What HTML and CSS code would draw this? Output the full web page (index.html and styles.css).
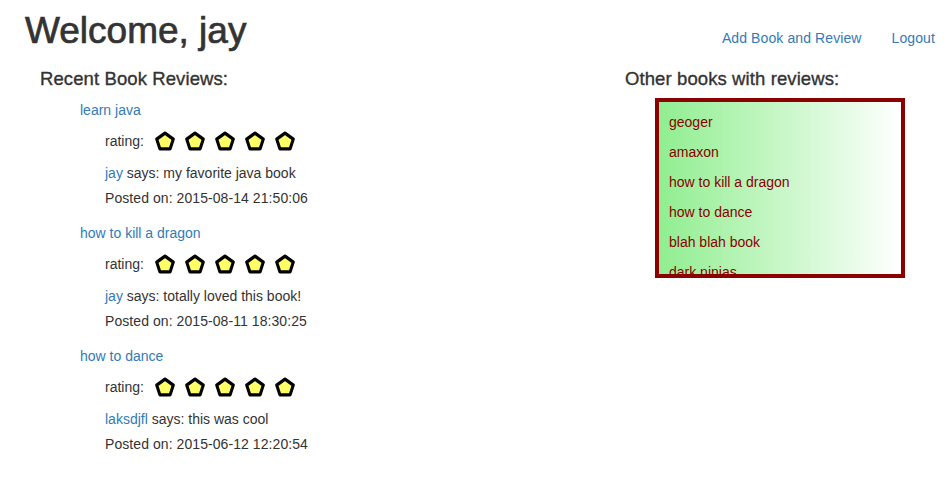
FILE: index.html
```html
<!DOCTYPE html>
<html>
<head>
<meta charset="utf-8">
<link rel="stylesheet" href="styles.css">
</head>
<body>
<div class="page">
  <header class="top">
    <h1 class="welcome">Welcome, jay</h1>
    <nav class="nav">
      <a href="#">Add Book and Review</a>
      <a href="#">Logout</a>
    </nav>
  </header>
  <div class="columns">
    <section class="recent">
      <h4 class="section-title">Recent Book Reviews:</h4>
      <div class="book">
        <a class="book-title" href="#">learn java</a>
        <div class="rating">
          <span class="rating-label">rating:</span>
          <span class="stars">
            <svg class="star" viewBox="0 0 24 24"><polygon points="12,3.4 21.04,9.96 17.58,20.59 6.42,20.59 2.96,9.96"/></svg>
            <svg class="star" viewBox="0 0 24 24"><polygon points="12,3.4 21.04,9.96 17.58,20.59 6.42,20.59 2.96,9.96"/></svg>
            <svg class="star" viewBox="0 0 24 24"><polygon points="12,3.4 21.04,9.96 17.58,20.59 6.42,20.59 2.96,9.96"/></svg>
            <svg class="star" viewBox="0 0 24 24"><polygon points="12,3.4 21.04,9.96 17.58,20.59 6.42,20.59 2.96,9.96"/></svg>
            <svg class="star" viewBox="0 0 24 24"><polygon points="12,3.4 21.04,9.96 17.58,20.59 6.42,20.59 2.96,9.96"/></svg>
          </span>
        </div>
        <p class="says"><a href="#">jay</a> says: my favorite java book</p>
        <p class="posted">Posted on: 2015-08-14 21:50:06</p>
      </div>
      <div class="book">
        <a class="book-title" href="#">how to kill a dragon</a>
        <div class="rating">
          <span class="rating-label">rating:</span>
          <span class="stars">
            <svg class="star" viewBox="0 0 24 24"><polygon points="12,3.4 21.04,9.96 17.58,20.59 6.42,20.59 2.96,9.96"/></svg>
            <svg class="star" viewBox="0 0 24 24"><polygon points="12,3.4 21.04,9.96 17.58,20.59 6.42,20.59 2.96,9.96"/></svg>
            <svg class="star" viewBox="0 0 24 24"><polygon points="12,3.4 21.04,9.96 17.58,20.59 6.42,20.59 2.96,9.96"/></svg>
            <svg class="star" viewBox="0 0 24 24"><polygon points="12,3.4 21.04,9.96 17.58,20.59 6.42,20.59 2.96,9.96"/></svg>
            <svg class="star" viewBox="0 0 24 24"><polygon points="12,3.4 21.04,9.96 17.58,20.59 6.42,20.59 2.96,9.96"/></svg>
          </span>
        </div>
        <p class="says"><a href="#">jay</a> says: totally loved this book!</p>
        <p class="posted">Posted on: 2015-08-11 18:30:25</p>
      </div>
      <div class="book">
        <a class="book-title" href="#">how to dance</a>
        <div class="rating">
          <span class="rating-label">rating:</span>
          <span class="stars">
            <svg class="star" viewBox="0 0 24 24"><polygon points="12,3.4 21.04,9.96 17.58,20.59 6.42,20.59 2.96,9.96"/></svg>
            <svg class="star" viewBox="0 0 24 24"><polygon points="12,3.4 21.04,9.96 17.58,20.59 6.42,20.59 2.96,9.96"/></svg>
            <svg class="star" viewBox="0 0 24 24"><polygon points="12,3.4 21.04,9.96 17.58,20.59 6.42,20.59 2.96,9.96"/></svg>
            <svg class="star" viewBox="0 0 24 24"><polygon points="12,3.4 21.04,9.96 17.58,20.59 6.42,20.59 2.96,9.96"/></svg>
            <svg class="star" viewBox="0 0 24 24"><polygon points="12,3.4 21.04,9.96 17.58,20.59 6.42,20.59 2.96,9.96"/></svg>
          </span>
        </div>
        <p class="says"><a href="#">laksdjfl</a> says: this was cool</p>
        <p class="posted">Posted on: 2015-06-12 12:20:54</p>
      </div>
    </section>
    <aside class="others">
      <h4 class="section-title">Other books with reviews:</h4>
      <div class="other-box">
        <ul class="other-list">
          <li>geoger</li>
          <li>amaxon</li>
          <li>how to kill a dragon</li>
          <li>how to dance</li>
          <li>blah blah book</li>
          <li>dark ninjas</li>
          <li>learn java</li>
        </ul>
      </div>
    </aside>
  </div>
</div>
</body>
</html>
```

FILE: styles.css
```css
* { box-sizing: border-box; }
html, body { margin: 0; padding: 0; background: #fff; }
body {
  font-family: "Liberation Sans", Arial, sans-serif;
  font-size: 14px;
  line-height: 20px;
  color: #333;
}
a { color: #337ab7; text-decoration: none; }

.top {
  display: flex;
  justify-content: space-between;
  align-items: flex-start;
  padding: 0 12px 0 25px;
}
.welcome {
  margin: 11px 0 0 0;
  font-size: 37px;
  line-height: 40px;
  font-weight: normal;
  color: #333;
  -webkit-text-stroke: 0.7px #333;
}
.nav {
  display: flex;
  gap: 30px;
  margin-top: 28px;
  letter-spacing: 0.1px;
}

.columns {
  display: grid;
  grid-template-columns: 585px 1fr;
  padding-left: 40px;
  margin-top: 18px;
}
.section-title {
  margin: 0;
  font-size: 18.5px;
  line-height: 20px;
  font-weight: normal;
  color: #333;
  -webkit-text-stroke: 0.35px #333;
  letter-spacing: 0.1px;
}

.book {
  padding-left: 40px;
  margin-top: 11px;
}
.book + .book { margin-top: 15px; }
.book-title { display: block; line-height: 20px; }
.rating {
  display: flex;
  align-items: center;
  height: 24px;
  margin-top: 9px;
  padding-left: 25px;
}
.rating-label { width: 49px; }
.stars { display: flex; gap: 8px; }
.star {
  width: 22px;
  height: 22px;
  display: block;
  overflow: visible;
}
.star polygon {
  fill: #ffff66;
  stroke: #000;
  stroke-width: 3.4;
  stroke-linejoin: round;
}
.says { margin: 10px 0 0 0; padding-left: 25px; }
.posted { margin: 5px 0 0 0; padding-left: 25px; letter-spacing: 0.07px; }

.other-box {
  margin: 9px 0 0 30px;
  width: 250px;
  height: 180px;
  border: 4px solid #8b0000;
  background: linear-gradient(to right, #90ee90, #ffffff);
  overflow: hidden;
}
.other-list {
  list-style: none;
  margin: 0;
  padding: 10px 10px 0 10px;
  color: #8b0000;
}
.other-list li { line-height: 20px; margin-bottom: 10px; }
```
